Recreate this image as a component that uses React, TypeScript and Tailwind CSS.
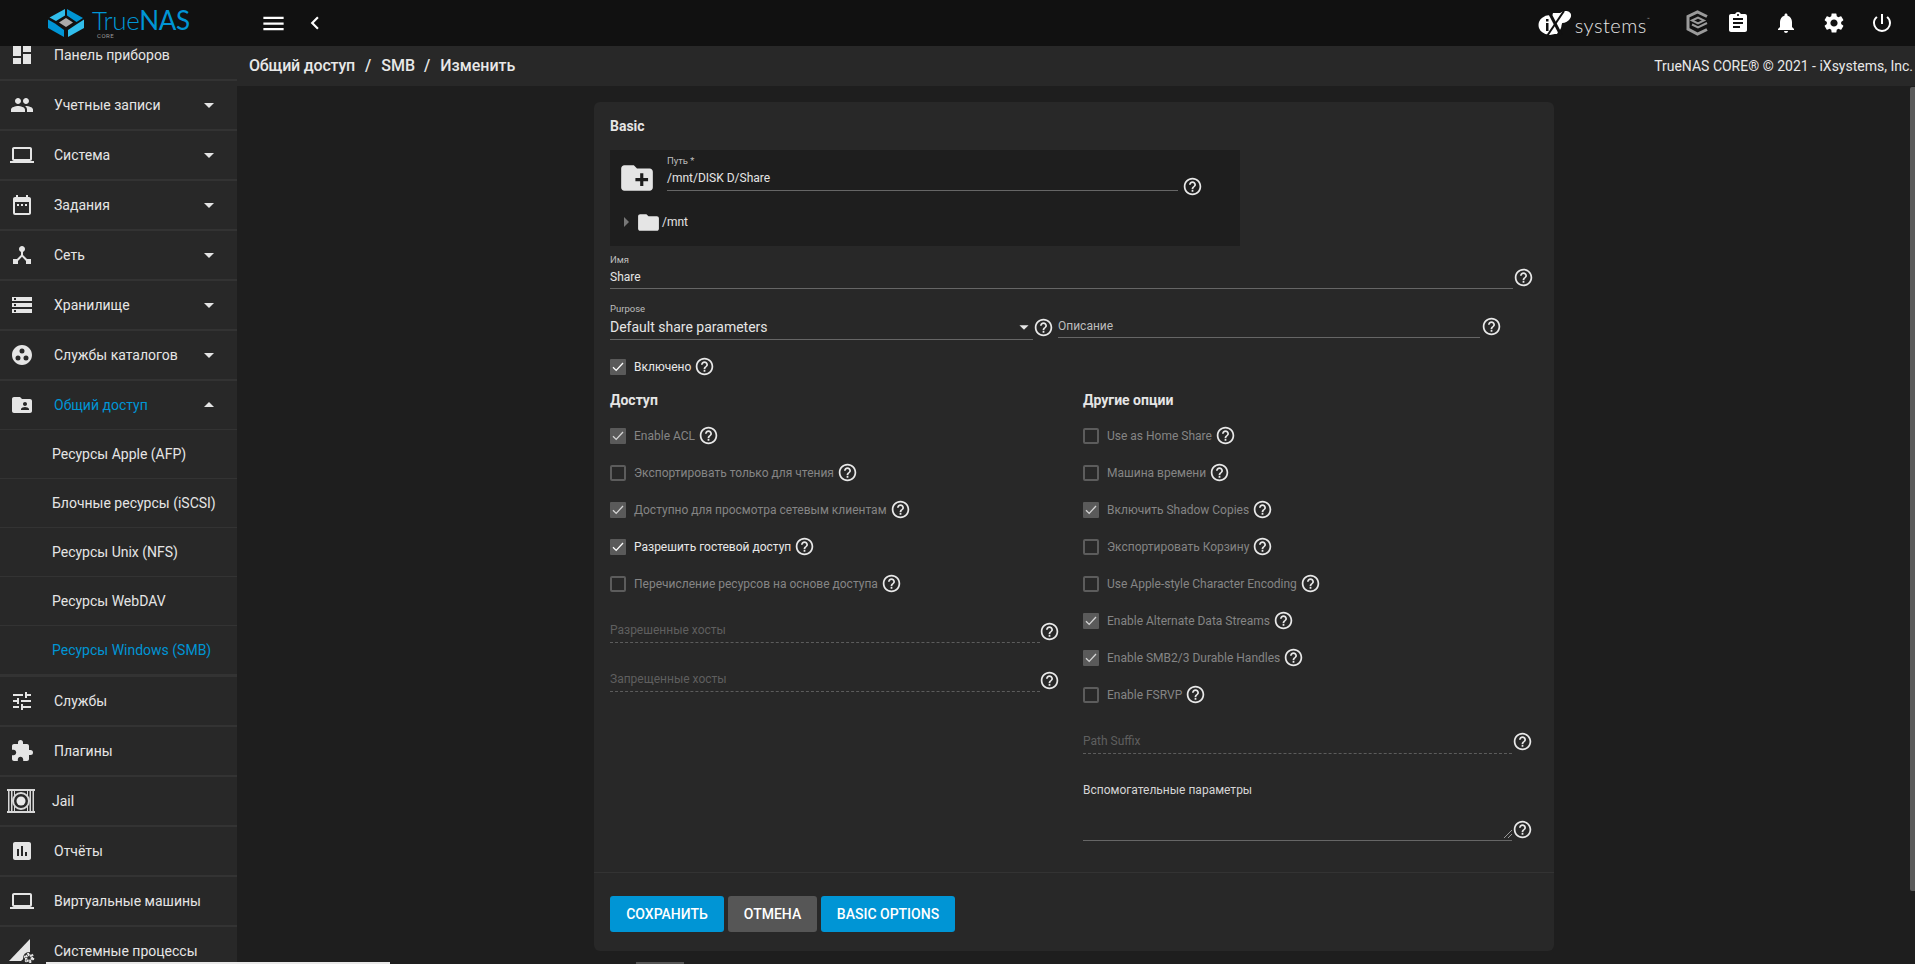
import type { ReactNode } from "react";
import {
  MdDashboard, MdPeople, MdLaptop, MdDateRange, MdDeviceHub, MdStorage, MdGroupWork, MdFolderShared,
  MdTune, MdExtension, MdAssessment, MdHelpOutline, MdCreateNewFolder, MdFolder, MdMenu, MdChevronLeft,
  MdAssignment, MdNotifications, MdSettings, MdPowerSettingsNew, MdArrowDropDown, MdArrowDropUp, MdArrowRight,
} from "react-icons/md";

function Help({ className = "" }: { className?: string }) {
  return <MdHelpOutline size={21} className={`shrink-0 text-[#e8e8e8] ${className}`} />;
}

function TrueNasLogo() {
  return (
    <svg width="36" height="28" viewBox="0 0 36 28" className="shrink-0">
      <polygon points="17,0 17,6.5 8,12 1.5,8.5" fill="#31beec" />
      <polygon points="19,0 35,9 28.5,13 19,6.5" fill="#0095d5" />
      <polygon points="0,10.5 7,14.5 16,21 16,28 0,19" fill="#0095d5" />
      <polygon points="36,10.5 36,19 20,28 20,21 29,15" fill="#31beec" />
      <polygon points="18,9 25,13.5 18,18 11,13.5" fill="#aaaaaa" />
    </svg>
  );
}

function IxLogo() {
  return (
    <svg width="34" height="25" viewBox="0 0 34 25" className="shrink-0">
      <ellipse cx="12" cy="14" rx="11.5" ry="10" fill="#fff" />
      <path d="M15 2 L29 2 L19 23 L9 23 Z" fill="#fff" />
      <ellipse cx="26" cy="6" rx="7.5" ry="5.5" fill="#fff" transform="rotate(-30 26 6)" />
      <line x1="11" y1="1" x2="23" y2="24" stroke="#111" strokeWidth="3" />
      <line x1="26" y1="0" x2="9" y2="25" stroke="#111" strokeWidth="2" />
      <rect x="8" y="12" width="2.5" height="8" fill="#111" />
      <rect x="8" y="8" width="2.5" height="2.5" fill="#111" />
    </svg>
  );
}

function TrueCommandIcon() {
  return (
    <svg width="24" height="26" viewBox="0 0 24 26" fill="none" stroke="#9a9a9a" strokeWidth="3" className="shrink-0">
      <path d="M21 6.5 L11.5 1.8 L2 6.5 V19 L11.5 24 L21 19.5" />
      <path d="M6 10.5 L12 7.5 L18 10.5 L12 13.5 Z" strokeWidth="2" />
      <path d="M6 14.5 L12 17.5 L21 13" strokeWidth="2" />
    </svg>
  );
}

function JailIcon() {
  return (
    <svg width="28" height="24" viewBox="0 0 28 24" className="shrink-0" fill="#d8d8d8">
      <rect x="0" y="0" width="28" height="2" />
      <rect x="0" y="22" width="28" height="2" />
      <rect x="1" y="2" width="1.5" height="20" />
      <rect x="4" y="2" width="1.5" height="20" />
      <rect x="7" y="2" width="1" height="20" />
      <rect x="20" y="2" width="1" height="20" />
      <rect x="22.5" y="2" width="1.5" height="20" />
      <rect x="25.5" y="2" width="1.5" height="20" />
      <circle cx="14" cy="12" r="8" fill="#282828" stroke="#d8d8d8" strokeWidth="2" />
      <circle cx="14" cy="12" r="4.5" fill="#e8e8e8" />
    </svg>
  );
}

function ProcessIcon() {
  return (
    <svg width="26" height="24" viewBox="0 0 26 24" className="shrink-0">
      <polygon points="0,22 21,0 21,14 12,22" fill="#e5e5e5" />
      <circle cx="20" cy="19" r="6" fill="#282828" />
      <circle cx="20" cy="19" r="3" fill="none" stroke="#e5e5e5" strokeWidth="2.4" strokeDasharray="1.9 0.6" />
      <circle cx="20" cy="19" r="4.6" fill="none" stroke="#e5e5e5" strokeWidth="1.4" strokeDasharray="2 2.8" />
    </svg>
  );
}

type NavProps = { icon: ReactNode; label: string; caret?: "down" | "up"; active?: boolean; thin?: boolean; textLeft?: string };

function NavItem({ icon, label, caret, active, thin, textLeft = "w-[54px]" }: NavProps) {
  return (
    <div className={`flex items-center shrink-0 ${thin ? "h-[49px] border-b border-[#333]" : "h-[50px] border-b-2 border-[#333]"}`}>
      <div className={`flex items-center justify-center pr-[10px] shrink-0 text-[#e5e5e5] ${textLeft}`}>{icon}</div>
      <span className={`flex-1 text-[14px] ${active ? "text-[#0095d5]" : "text-[#e5e5e5]"}`}>{label}</span>
      {caret === "down" && <MdArrowDropDown size={24} className="mr-4 text-[#e5e5e5]" />}
      {caret === "up" && <MdArrowDropUp size={24} className="mr-4 text-[#e5e5e5]" />}
    </div>
  );
}

function SubItem({ label, active, last }: { label: string; active?: boolean; last?: boolean }) {
  return (
    <div className={`flex items-center pl-[52px] text-[14px] shrink-0 ${last ? "h-[51px] border-b-[3px] border-[#333]" : "h-[49px] border-b border-[#333]"} ${active ? "text-[#0095d5]" : "text-[#e5e5e5]"}`}>
      {label}
    </div>
  );
}

function Sidebar() {
  return (
    <aside className="w-[237px] shrink-0 bg-[#282828] overflow-hidden">
      <div className="flex flex-col -mt-[15px]">
        <NavItem icon={<MdDashboard size={24} />} label="Панель приборов" />
        <NavItem icon={<MdPeople size={24} />} label="Учетные записи" caret="down" />
        <NavItem icon={<MdLaptop size={24} />} label="Система" caret="down" />
        <NavItem icon={<MdDateRange size={24} />} label="Задания" caret="down" />
        <NavItem icon={<MdDeviceHub size={24} />} label="Сеть" caret="down" />
        <NavItem icon={<MdStorage size={24} />} label="Хранилище" caret="down" />
        <NavItem icon={<MdGroupWork size={24} />} label="Службы каталогов" caret="down" />
        <NavItem icon={<MdFolderShared size={24} />} label="Общий доступ" caret="up" active thin />
        <SubItem label="Ресурсы Apple (AFP)" />
        <SubItem label="Блочные ресурсы (iSCSI)" />
        <SubItem label="Ресурсы Unix (NFS)" />
        <SubItem label="Ресурсы WebDAV" />
        <SubItem label="Ресурсы Windows (SMB)" active last />
        <NavItem icon={<MdTune size={24} />} label="Службы" />
        <NavItem icon={<MdExtension size={24} />} label="Плагины" />
        <NavItem icon={<JailIcon />} label="Jail" textLeft="w-[52px]" />
        <NavItem icon={<MdAssessment size={24} />} label="Отчёты" />
        <NavItem icon={<MdLaptop size={24} />} label="Виртуальные машины" />
        <NavItem icon={<ProcessIcon />} label="Системные процессы" />
      </div>
    </aside>
  );
}

function TopBar() {
  return (
    <header className="h-[46px] shrink-0 bg-[#111] flex items-center text-[#e5e5e5]">
      <div className="w-[237px] shrink-0 pl-[48px] flex items-center">
        <TrueNasLogo />
        <div className="relative ml-[8px] -mt-[6px] h-[22px] leading-[22px]">
          <span className="text-[26px] text-[#0095d5] tracking-[-0.4px]" style={{ fontFamily: "Lato, sans-serif" }}>
            <span className="font-light">True</span>NAS
          </span>
          <span className="absolute left-[5px] top-[24px] text-[6px] leading-[6px] tracking-[0.5px] text-[#999]">CORE</span>
        </div>
      </div>
      <MdMenu size={27} className="ml-[23px] text-white" />
      <MdChevronLeft size={26} className="ml-[15px] text-white" />
      <div className="flex-1" />
      <IxLogo />
      <span className="ml-[3px] text-[20px] font-light text-[#e5e5e5] tracking-[0.5px] mt-[3px]" style={{ fontFamily: "Lato, sans-serif" }}>systems</span>
      <span className="text-[5px] text-[#aaa] -mt-[6px]">™</span>
      <span className="ml-[36px]"><TrueCommandIcon /></span>
      <MdAssignment size={24} className="ml-[16px] text-white" />
      <MdNotifications size={24} className="ml-[24px] text-white" />
      <MdSettings size={24} className="ml-[24px] text-white" />
      <MdPowerSettingsNew size={24} className="ml-[24px] mr-[21px] text-white" />
    </header>
  );
}

function Breadcrumbs() {
  return (
    <div className="h-[40px] shrink-0 bg-[#282828] flex items-center pl-[12px] pr-[2px] text-[#e8e8e8] font-medium">
      <div className="flex items-center text-[16px] gap-[8px]">
        <span className="tracking-[-0.2px]">Общий доступ</span>
        <span className="ml-[2px]">/</span>
        <span className="ml-[2px]">SMB</span>
        <span className="ml-[1px]">/</span>
        <span className="ml-[2px]">Изменить</span>
      </div>
      <span className="ml-auto text-[14px] font-normal">TrueNAS CORE® © 2021 - iXsystems, Inc.</span>
    </div>
  );
}

function Check({ label, checked, on }: { label: string; checked?: boolean; on?: boolean }) {
  return (
    <div className="flex items-center h-[37px]">
      {checked ? (
        <span className="w-4 h-4 bg-[#5a5a5a] rounded-[1px] flex items-center justify-center shrink-0">
          <svg width="12" height="10" viewBox="0 0 12 10" fill="none" stroke={on ? "#fff" : "#d5d5d5"} strokeWidth="1.3">
            <path d="M1 5.2 L4.2 8.4 L11 1" />
          </svg>
        </span>
      ) : (
        <span className="w-4 h-4 border-2 border-[#5c5c5c] rounded-[2px] shrink-0" />
      )}
      <span className={`ml-2 text-[12px] ${on ? "text-[#e8e8e8]" : "text-[#858585]"}`}>{label}</span>
      <Help className="ml-[3px]" />
    </div>
  );
}

function HostField({ label, className }: { label: string; className: string }) {
  return (
    <div className={`flex w-[450px] ${className}`}>
      <div className="w-[430px] h-[22px] border-b border-dashed border-[#5c5c5c] text-[12px] leading-[18px] text-[#5f5f5f]">{label}</div>
      <Help className="ml-[-1px]" />
    </div>
  );
}

function Card() {
  return (
    <section className="ml-[357px] mt-4 w-[960px] h-[849px] bg-[#282828] rounded-md flex flex-col shrink-0">
      <div className="flex-1 pl-4 pt-[14px]">
        <h3 className="h-5 leading-5 text-[14px] font-bold text-[#e5e5e5]">Basic</h3>

        <div className="mt-[14px] w-[630px] h-[96px] bg-[#1e1e1e] flex flex-col">
          <div className="flex h-[53px]">
            <MdCreateNewFolder size={38} className="ml-[8px] mt-[9px] text-[#e5e5e5] shrink-0" />
            <div className="ml-[11px] w-[511px] h-[41px] border-b border-[#666]">
              <div className="mt-[5px] h-3 leading-3 text-[9.5px] text-[#bdbdbd]">Путь *</div>
              <div className="mt-[2px] h-[18px] leading-[18px] text-[12px] text-[#e5e5e5]">/mnt/DISK D/Share</div>
            </div>
            <Help className="ml-[4px] mt-[26px]" />
          </div>
          <div className="flex items-center h-[32px] mt-[3px] pl-[9px]">
            <MdArrowRight size={24} className="text-[#777] -ml-[5px] -mr-[2px]" />
            <MdFolder size={25} className="text-[#e5e5e5]" />
            <span className="ml-[1px] text-[12px] text-[#e5e5e5]">/mnt</span>
          </div>
        </div>

        <div className="mt-2 flex h-[35px]">
          <div className="w-[903px] border-b border-[#666]">
            <div className="h-3 leading-3 text-[9.5px] text-[#bdbdbd]">Имя</div>
            <div className="mt-[2px] h-[18px] leading-[18px] text-[12px] text-[#e5e5e5]">Share</div>
          </div>
          <Help className="mt-[13px]" />
        </div>

        <div className="mt-[14px] flex h-[37px]">
          <div className="w-[423px] border-b border-[#666]">
            <div className="h-3 leading-3 text-[9.5px] text-[#bdbdbd]">Purpose</div>
            <div className="mt-[3px] h-[18px] flex items-center justify-between text-[14px] text-[#e5e5e5]">
              <span>Default share parameters</span>
              <MdArrowDropDown size={22} className="-mr-[2px]" />
            </div>
          </div>
          <Help className="mt-[14px]" />
          <div className="ml-[4px] w-[422px] h-[35px] border-b border-[#666] flex items-end pb-[2px] text-[12px] leading-[18px] text-[#bdbdbd]">Описание</div>
          <Help className="mt-[13px] ml-[1px]" />
        </div>

        <div className="mt-[8px] -mb-[8px]">
          <Check label="Включено" checked on />
        </div>

        <div className="flex mt-[13px]">
          <div className="w-[473px] shrink-0">
            <h3 className="h-5 leading-5 text-[14px] font-bold text-[#e5e5e5] mb-[7px]">Доступ</h3>
            <Check label="Enable ACL" checked />
            <Check label="Экспортировать только для чтения" />
            <Check label="Доступно для просмотра сетевым клиентам" checked />
            <Check label="Разрешить гостевой доступ" checked on />
            <Check label="Перечисление ресурсов на основе доступа" />
            <HostField label="Разрешенные хосты" className="mt-[19px]" />
            <HostField label="Запрещенные хосты" className="mt-[27px]" />
          </div>
          <div className="flex-1">
            <h3 className="h-5 leading-5 text-[14px] font-bold text-[#e5e5e5] mb-[7px]">Другие опции</h3>
            <Check label="Use as Home Share" />
            <Check label="Машина времени" />
            <Check label="Включить Shadow Copies" checked />
            <Check label="Экспортировать Корзину" />
            <Check label="Use Apple-style Character Encoding" />
            <Check label="Enable Alternate Data Streams" checked />
            <Check label="Enable SMB2/3 Durable Handles" checked />
            <Check label="Enable FSRVP" />
            <div className="flex mt-[18px]">
              <div className="w-[429px] h-[23px] border-b border-dashed border-[#5c5c5c] text-[12px] leading-[20px] text-[#5f5f5f]">Path Suffix</div>
              <Help />
            </div>
            <div className="mt-[28px] h-4 leading-4 text-[12px] text-[#d5d5d5]">Вспомогательные параметры</div>
            <div className="flex">
              <div className="relative w-[429px] h-[43px] border-b border-[#666]">
                <svg width="8" height="8" viewBox="0 0 8 8" stroke="#999" className="absolute right-0 bottom-[2px]">
                  <path d="M0 8 L8 0 M4 8 L8 4" />
                </svg>
              </div>
              <Help className="mt-[21px]" />
            </div>
          </div>
        </div>
      </div>

      <div className="h-[79px] border-t border-[#333] pl-4 pt-[23px] flex gap-1 items-start">
        <button className="h-9 w-[114px] rounded-[3px] bg-[#0095d5] text-white text-[14px] font-medium">СОХРАНИТЬ</button>
        <button className="h-9 w-[89px] rounded-[3px] bg-[#565656] text-white text-[14px] font-medium">ОТМЕНА</button>
        <button className="h-9 w-[134px] rounded-[3px] bg-[#0095d5] text-white text-[14px] font-medium">BASIC OPTIONS</button>
      </div>
    </section>
  );
}

export default function App() {
  return (
    <div className="relative h-[964px] w-full flex flex-col overflow-hidden bg-[#1e1e1e]" style={{ fontFamily: "Roboto, sans-serif" }}>
      <TopBar />
      <div className="flex-1 flex min-h-0">
        <Sidebar />
        <main className="flex-1 flex flex-col min-w-0">
          <Breadcrumbs />
          <Card />
        </main>
      </div>
      {/* scrollbars of the inner panes */}
      <div className="absolute right-0 top-[87px] w-[5px] h-[804px] bg-[#5a5a5a] rounded-l-[2px]" />
      <div className="absolute left-[46px] bottom-0 w-[344px] h-[2px] bg-[#e8e8e8]" />
      <div className="absolute left-[636px] bottom-0 w-[48px] h-[2px] bg-[#555]" />
    </div>
  );
}
